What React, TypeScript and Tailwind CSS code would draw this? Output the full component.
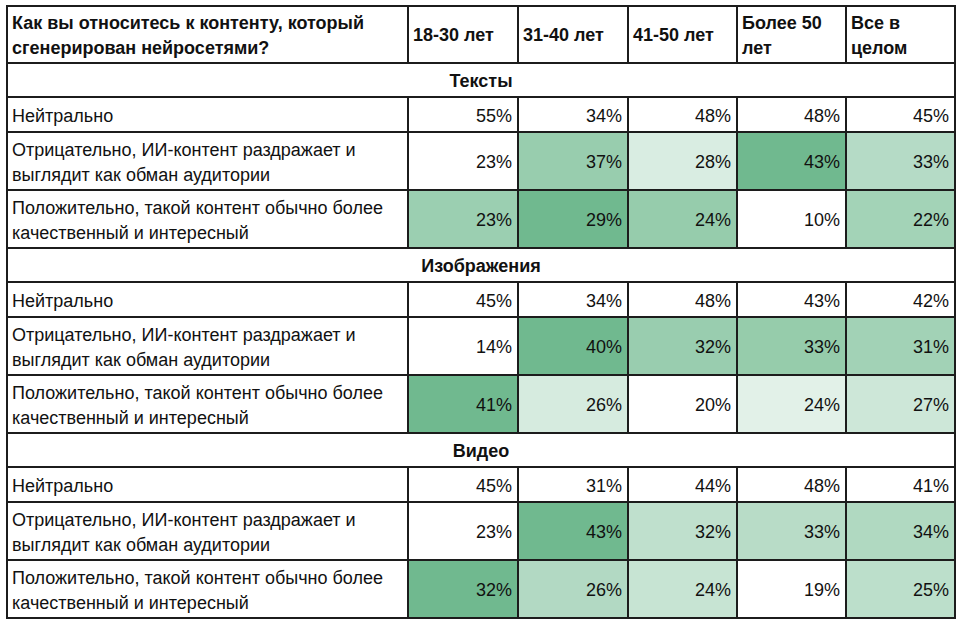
import React from "react";

type Cell = { v: string; bg: string };

type Row = {
  label: string[];
  cells: Cell[];
};

type Section = {
  title: string;
  rows: Row[];
};

const W = "bg-white";
const DARK = "bg-[#70b98f]";

const neutral = "Нейтрально";
const negative = ["Отрицательно, ИИ-контент раздражает и", "выглядит как обман аудитории"];
const positive = ["Положительно, такой контент обычно более", "качественный и интересный"];

const sections: Section[] = [
  {
    title: "Тексты",
    rows: [
      {
        label: [neutral],
        cells: [
          { v: "55%", bg: W },
          { v: "34%", bg: W },
          { v: "48%", bg: W },
          { v: "48%", bg: W },
          { v: "45%", bg: W },
        ],
      },
      {
        label: negative,
        cells: [
          { v: "23%", bg: W },
          { v: "37%", bg: "bg-[#98cdae]" },
          { v: "28%", bg: "bg-[#d9ede2]" },
          { v: "43%", bg: DARK },
          { v: "33%", bg: "bg-[#b5dbc6]" },
        ],
      },
      {
        label: positive,
        cells: [
          { v: "23%", bg: "bg-[#9bcfb1]" },
          { v: "29%", bg: DARK },
          { v: "24%", bg: "bg-[#96ccac]" },
          { v: "10%", bg: W },
          { v: "22%", bg: "bg-[#a3d3b7]" },
        ],
      },
    ],
  },
  {
    title: "Изображения",
    rows: [
      {
        label: [neutral],
        cells: [
          { v: "45%", bg: W },
          { v: "34%", bg: W },
          { v: "48%", bg: W },
          { v: "43%", bg: W },
          { v: "42%", bg: W },
        ],
      },
      {
        label: negative,
        cells: [
          { v: "14%", bg: W },
          { v: "40%", bg: DARK },
          { v: "32%", bg: "bg-[#99cdaf]" },
          { v: "33%", bg: "bg-[#96ccab]" },
          { v: "31%", bg: "bg-[#a2d2b6]" },
        ],
      },
      {
        label: positive,
        cells: [
          { v: "41%", bg: DARK },
          { v: "26%", bg: "bg-[#d6ebdf]" },
          { v: "20%", bg: W },
          { v: "24%", bg: "bg-[#e2f1e8]" },
          { v: "27%", bg: "bg-[#cde7d8]" },
        ],
      },
    ],
  },
  {
    title: "Видео",
    rows: [
      {
        label: [neutral],
        cells: [
          { v: "45%", bg: W },
          { v: "31%", bg: W },
          { v: "44%", bg: W },
          { v: "48%", bg: W },
          { v: "41%", bg: W },
        ],
      },
      {
        label: negative,
        cells: [
          { v: "23%", bg: W },
          { v: "43%", bg: DARK },
          { v: "32%", bg: "bg-[#bfe0cd]" },
          { v: "33%", bg: "bg-[#b8dcc7]" },
          { v: "34%", bg: "bg-[#b0d9c1]" },
        ],
      },
      {
        label: positive,
        cells: [
          { v: "32%", bg: DARK },
          { v: "26%", bg: "bg-[#b2d9c3]" },
          { v: "24%", bg: "bg-[#c7e4d3]" },
          { v: "19%", bg: W },
          { v: "25%", bg: "bg-[#bcdfcb]" },
        ],
      },
    ],
  },
];

const headers: string[][] = [
  ["18-30 лет"],
  ["31-40 лет"],
  ["41-50 лет"],
  ["Более 50", "лет"],
  ["Все в", "целом"],
];

function Lines({ lines }: { lines: string[] }) {
  return (
    <span>
      {lines.map((l, i) => (
        <React.Fragment key={i}>
          {i > 0 && <br />}
          {l}
        </React.Fragment>
      ))}
    </span>
  );
}

export default function App() {
  return (
    <div className="min-h-screen bg-white pl-[6px] pt-[5px] font-['Liberation_Sans',Arial,sans-serif] text-[18px] leading-[25px] text-[#111]">
      <div className="grid w-fit grid-cols-[399px_108px_108px_107px_107px_107px] gap-[2px] bg-[#1c1c1c] p-[2px]">
        {/* Header */}
        <div className="flex h-[55px] items-center bg-white pl-[4px] pt-[2px] font-bold">
          <Lines lines={["Как вы относитесь к контенту, который", "сгенерирован нейросетями?"]} />
        </div>
        {headers.map((h, i) => (
          <div key={i} className="flex h-[55px] items-center bg-white pl-[4px] pt-[2px] font-bold">
            <Lines lines={h} />
          </div>
        ))}

        {sections.map((section) => (
          <React.Fragment key={section.title}>
            <div className="col-span-6 flex h-[32px] items-center justify-center bg-white pt-[2px] font-bold">
              {section.title}
            </div>
            {section.rows.map((row, ri) => {
              const h = row.label.length > 1 ? "h-[56px]" : "h-[33px]";
              return (
                <React.Fragment key={ri}>
                  <div className={`flex ${h} items-center bg-white pl-[4px] pt-[3px]`}>
                    <Lines lines={row.label} />
                  </div>
                  {row.cells.map((c, ci) => (
                    <div key={ci} className={`flex ${h} items-center justify-end pr-[5px] pt-[3px] ${c.bg}`}>
                      {c.v}
                    </div>
                  ))}
                </React.Fragment>
              );
            })}
          </React.Fragment>
        ))}
      </div>
    </div>
  );
}
